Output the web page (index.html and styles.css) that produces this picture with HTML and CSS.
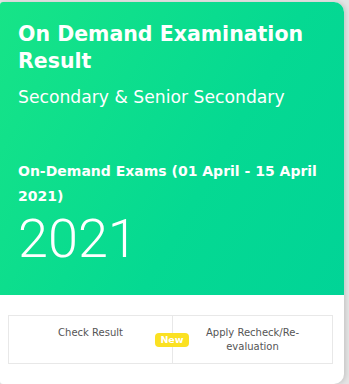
FILE: index.html
```html
<!DOCTYPE html>
<html>
<head>
<meta charset="utf-8">
<link rel="stylesheet" href="styles.css">
</head>
<body>
<div class="card">
  <div class="hero">
    <h1 class="title">On Demand Examination Result</h1>
    <p class="subtitle">Secondary &amp; Senior Secondary</p>
    <p class="exams">On-Demand Exams (01 April - 15 April 2021)</p>
    <p class="year">2021</p>
  </div>
  <div class="actions">
    <div class="buttons">
      <a class="btn">Check Result</a>
      <a class="btn">Apply Recheck/Re-<br>evaluation</a>
      <span class="badge">New</span>
    </div>
  </div>
</div>
</body>
</html>
```
FILE: styles.css
```css
html, body { margin: 0; padding: 0; }
body {
  background: #e4e4e4;
  width: 349px;
  height: 384px;
  overflow: hidden;
  font-family: "DejaVu Sans", sans-serif;
}
.card {
  margin-top: 2px;
  width: 344px;
  height: 382px;
  background: #fff;
  border-radius: 3px 10px 10px 3px;
  box-shadow: 2px 0 4px rgba(0,0,0,0.12);
  overflow: hidden;
  display: flex;
  flex-direction: column;
}
.hero {
  height: 293px;
  box-sizing: border-box;
  padding: 19px 18px 0 18px;
  background: linear-gradient(120deg, #17e487 0%, #05d992 60%, #01d497 100%);
  color: #fff;
}
.title {
  margin: 0;
  font-size: 20.5px;
  line-height: 27px;
  font-weight: 700;
}
.subtitle {
  margin: 11px 0 0 0;
  font-size: 17.2px;
  line-height: 22px;
}
.exams {
  margin: 51px 0 0 0;
  font-size: 14px;
  line-height: 25px;
  font-weight: 700;
}
.year {
  margin: 0;
  font-family: Roboto, sans-serif;
  font-size: 54px;
  line-height: 60px;
  font-weight: 300;
}
.actions {
  padding: 20px 11px 0 8px;
}
.buttons {
  position: relative;
  display: grid;
  grid-template-columns: 163px 1fr;
  height: 49px;
  box-sizing: border-box;
  border: 1px solid #e8e8e8;
}
.btn {
  font-size: 10px;
  line-height: 14px;
  color: #555;
  text-align: center;
  padding-top: 10px;
}
.btn + .btn { border-left: 1px solid #e8e8e8; }
.badge {
  position: absolute;
  left: 146px;
  top: 17px;
  width: 34px;
  height: 14px;
  background: #fbe122;
  color: #fff;
  border-radius: 4px;
  font-size: 9.5px;
  font-weight: 700;
  line-height: 14px;
  text-align: center;
}
```
